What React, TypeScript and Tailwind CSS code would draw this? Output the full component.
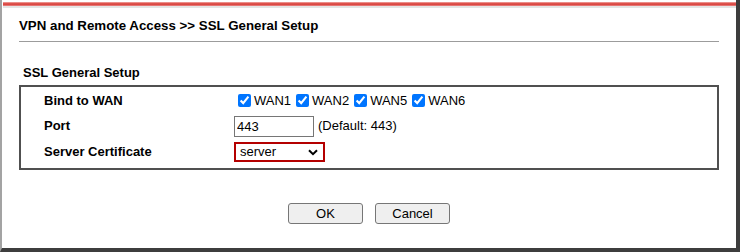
import React, { useState } from 'react'

const font = { fontFamily: '"Liberation Sans", Arial, sans-serif' }

function ChevronDown() {
  return (
    <svg width="10" height="7" viewBox="0 0 10 7" className="block">
      <path d="M1 1.2 L5 5.2 L9 1.2" fill="none" stroke="#000" strokeWidth="2" />
    </svg>
  )
}

export default function App() {
  const [wans, setWans] = useState({ WAN1: true, WAN2: true, WAN5: true, WAN6: true })
  const [port, setPort] = useState('443')
  const [cert, setCert] = useState('server')

  function toggle(name: string) {
    setWans((w) => ({ ...w, [name]: !w[name as keyof typeof w] }))
  }

  return (
    <div
      className="w-[740px] h-[252px] bg-white box-border flex flex-col border-l-2 border-l-[#a3a3a3] border-r-[4px] border-r-[#3d3d3d] border-b-[4px] border-b-[#3d3d3d] text-black"
      style={font}
    >
      <div className="mt-[2px] ml-px h-[4px] bg-linear-to-b from-[#f0a8a8] via-[#d42b2b] to-[#e98888]" />
      <div className="h-[2px] ml-px bg-[#e4e4e4]" />

      <div className="mt-[10px] pl-[17px] text-[13.3px] leading-[15px] font-bold">
        VPN and Remote Access &gt;&gt; SSL General Setup
      </div>
      <div className="mt-[8px] ml-[17px] w-[700px] h-px bg-[#9c9c9c]" />

      <div className="mt-[23px] pl-[21px] text-[13px] leading-[16px] font-bold">SSL General Setup</div>

      <div className="mt-[4px] ml-[17px] w-[700px] h-[85px] box-border border-2 border-[#505050] pt-[1px] text-[13px]">
        <div className="flex items-center h-[25px]">
          <div className="w-[213px] pl-[23px] font-bold">Bind to WAN</div>
          <div className="flex items-center">
            {Object.keys(wans).map((name) => (
              <label key={name} className="flex items-center">
                <input
                  type="checkbox"
                  className="w-[13px] h-[13px] ml-[4px] mr-[3px] accent-[#0075ff]"
                  checked={wans[name as keyof typeof wans]}
                  onChange={() => toggle(name)}
                />
                <span className="mr-[1px]">{name}</span>
              </label>
            ))}
          </div>
        </div>
        <div className="flex items-center h-[26px]">
          <div className="w-[213px] pl-[23px] font-bold">Port</div>
          <input
            type="text"
            value={port}
            onChange={(e) => setPort(e.target.value)}
            className="w-[80px] h-[21px] box-border border border-[#767676] px-[2px] text-[13px] outline-none"
            style={font}
          />
          <span className="ml-[4px]">(Default: 443)</span>
        </div>
        <div className="flex items-center h-[26px]">
          <div className="w-[213px] pl-[23px] font-bold">Server Certificate</div>
          <div className="relative w-[91px] h-[20px]">
            <select
              value={cert}
              onChange={(e) => setCert(e.target.value)}
              className="appearance-none w-full h-full box-border border-2 border-[#b40000] bg-white pl-[4px] text-[13px] leading-[16px] outline-none"
              style={font}
            >
              <option value="server">server</option>
            </select>
            <div className="absolute right-[7px] top-[7px] pointer-events-none">
              <ChevronDown />
            </div>
          </div>
        </div>
      </div>

      <div className="mt-[33px] flex justify-center gap-[12px]">
        <button className="w-[75px] h-[21px] box-border border border-[#767676] rounded-[3px] bg-[#efefef] text-[13px]" style={font}>
          OK
        </button>
        <button className="w-[75px] h-[21px] box-border border border-[#767676] rounded-[3px] bg-[#efefef] text-[13px]" style={font}>
          Cancel
        </button>
      </div>
    </div>
  )
}
